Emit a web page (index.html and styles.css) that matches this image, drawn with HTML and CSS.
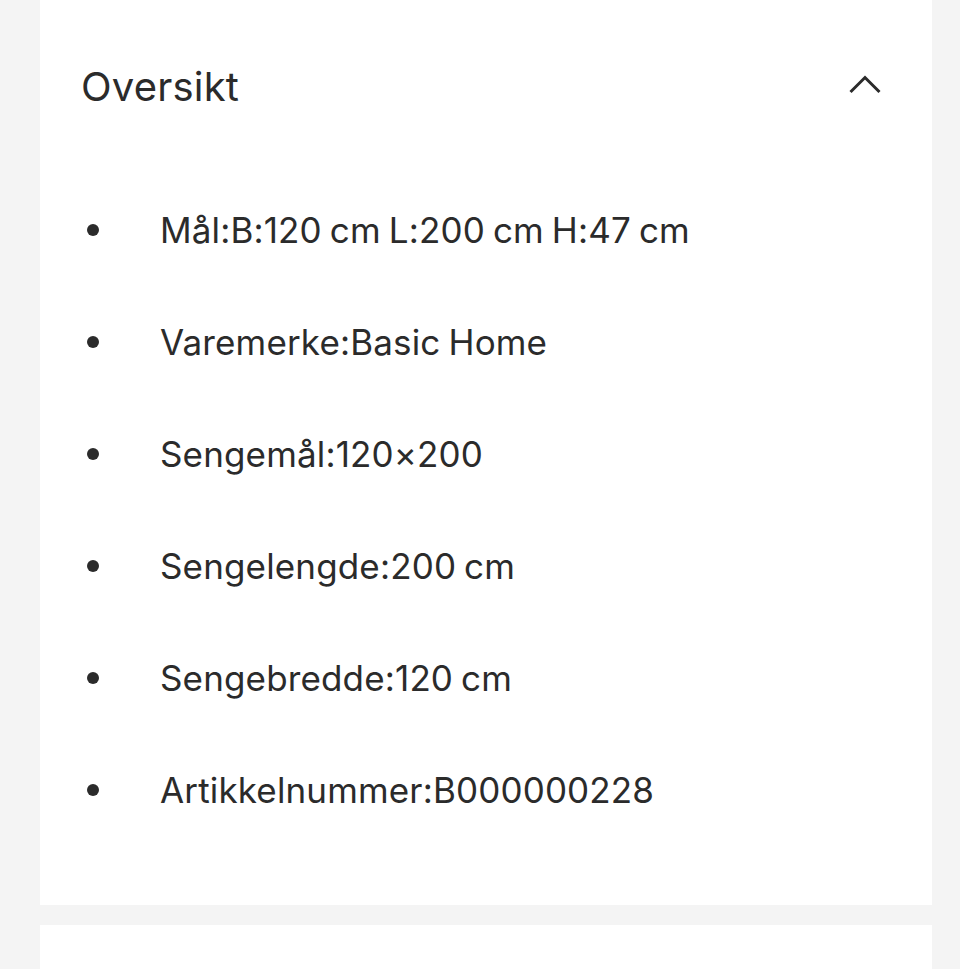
FILE: index.html
```html
<!DOCTYPE html>
<html lang="no">
<head>
<meta charset="utf-8">
<link rel="stylesheet" href="styles.css">
</head>
<body>
<section class="card">
  <div class="card-header">
    <h2 class="title">Oversikt</h2>
    <svg class="chevron" width="32" height="19" viewBox="0 0 32 19" aria-hidden="true">
      <path d="M1.5 17 L16 2.5 L30.5 17" fill="none" stroke="#2b2b2b" stroke-width="3"/>
    </svg>
  </div>
  <ul class="specs">
    <li class="spec"><span class="dot"></span><span class="spec-text">Mål:B:120 cm L:200 cm H:47 cm</span></li>
    <li class="spec"><span class="dot"></span><span class="spec-text">Varemerke:Basic Home</span></li>
    <li class="spec"><span class="dot"></span><span class="spec-text">Sengemål:120×200</span></li>
    <li class="spec"><span class="dot"></span><span class="spec-text">Sengelengde:200 cm</span></li>
    <li class="spec"><span class="dot"></span><span class="spec-text">Sengebredde:120 cm</span></li>
    <li class="spec"><span class="dot"></span><span class="spec-text">Artikkelnummer:B000000228</span></li>
  </ul>
</section>
<section class="card card-next"></section>
</body>
</html>
```

FILE: styles.css
```css
* { box-sizing: border-box; }
html, body { margin: 0; padding: 0; }
body {
  background: #f4f4f4;
  font-family: Inter, "Noto Sans", sans-serif;
  color: #2b2b2b;
  padding: 0 28px 0 40px;
  height: 969px;
  overflow: hidden;
}
.card {
  background: #ffffff;
  padding: 0 51px 59px 41px;
}
.card-header {
  height: 174px;
  display: flex;
  align-items: center;
  justify-content: space-between;
}
.title {
  margin: 0;
  font-size: 40px;
  font-weight: 400;
  line-height: 48px;
  letter-spacing: 0.2px;
}
.chevron {
  display: block;
  margin-top: -5px;
}
.specs {
  list-style: none;
  margin: 0;
  padding: 0 0 0 6px;
}
.spec {
  height: 112px;
  display: flex;
  align-items: center;
  gap: 61px;
}
.dot {
  width: 12px;
  height: 12px;
  border-radius: 50%;
  background: #2b2b2b;
  flex: none;
}
.spec-text {
  font-size: 35px;
  line-height: 40px;
  letter-spacing: 0.15px;
  word-spacing: -2px;
}
.card-next {
  margin-top: 20px;
  height: 44px;
  padding: 0;
}
```
